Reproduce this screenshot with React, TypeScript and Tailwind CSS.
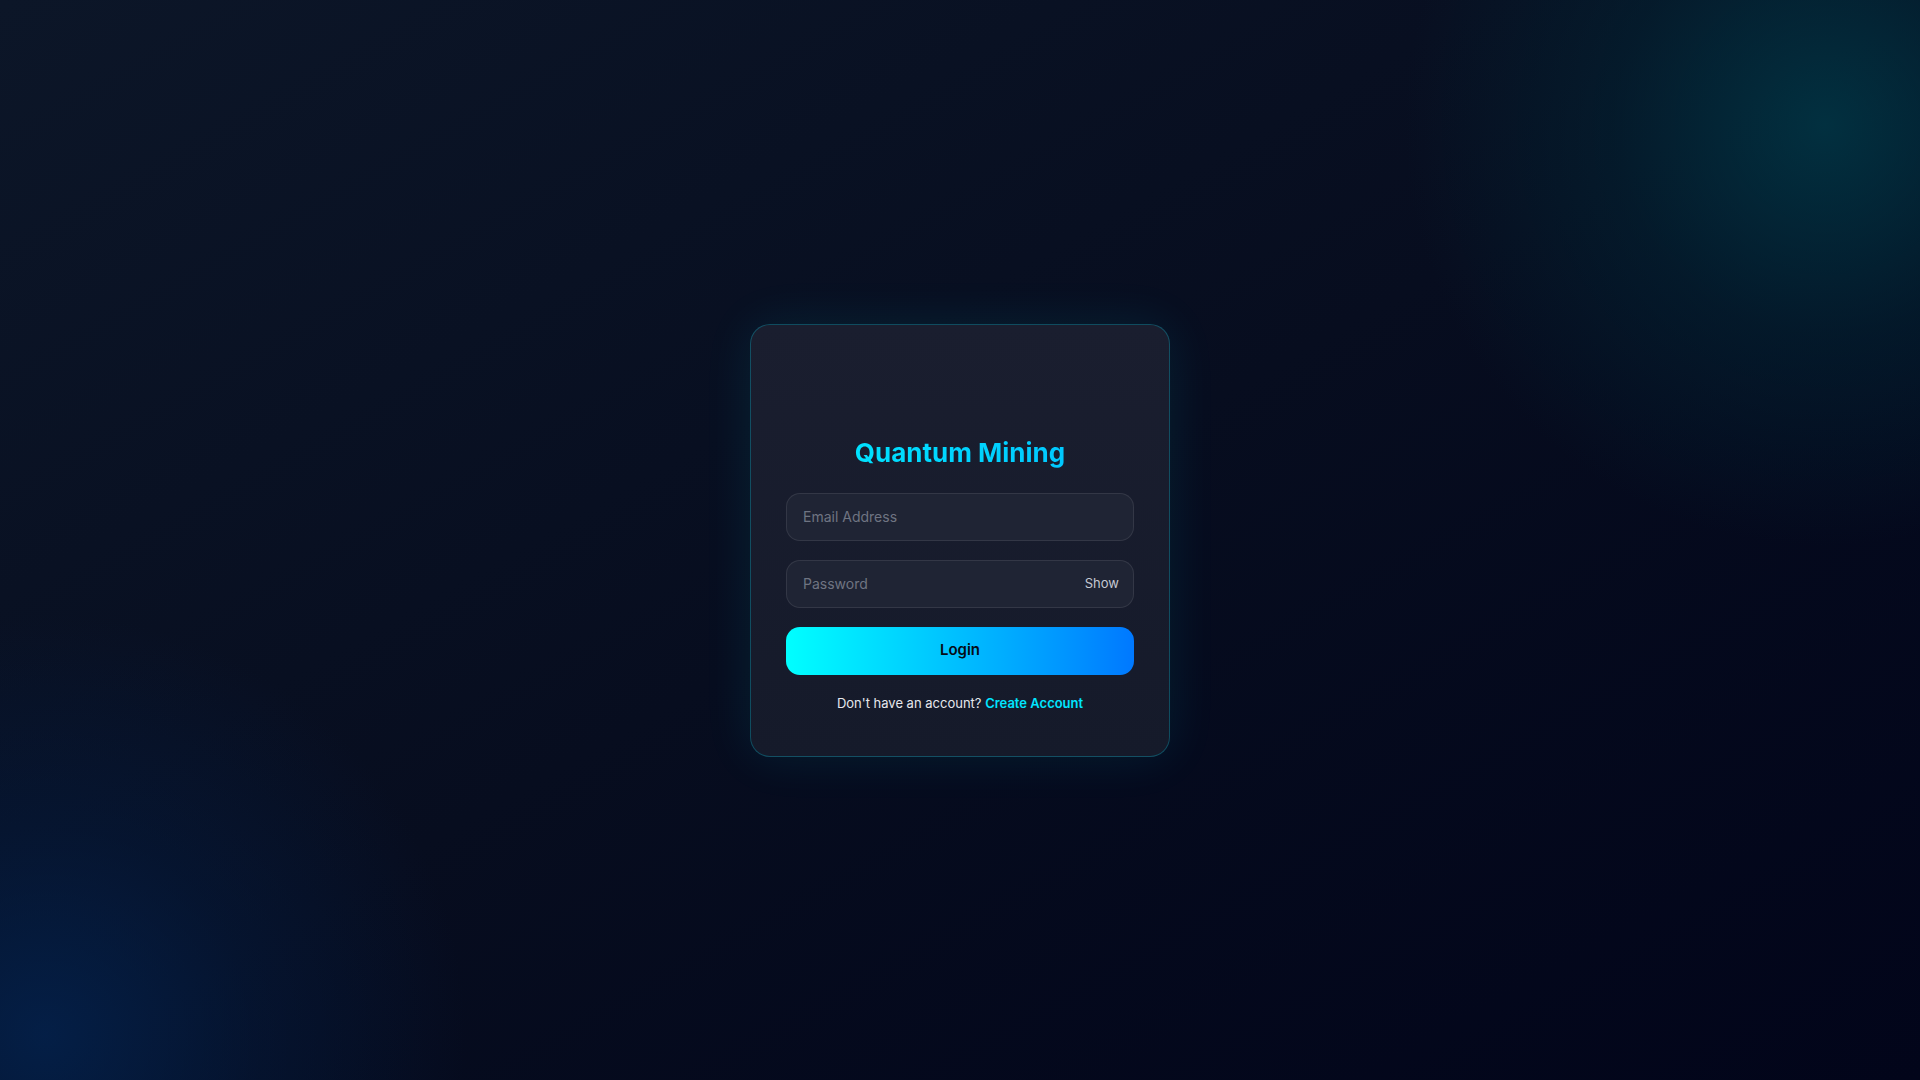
import React, { useState } from 'react';

export default function App() {
  const [showPassword, setShowPassword] = useState(false);

  return (
    <div
      className="relative min-h-screen w-full overflow-hidden flex items-center justify-center bg-gradient-to-br from-[#0c1628] via-[#070d1f] to-[#02051a]"
      style={{ fontFamily: 'Inter, "Noto Sans", sans-serif' }}
    >
      {/* Ambient glows */}
      <div className="pointer-events-none absolute -top-[300px] right-[-330px] w-[850px] h-[850px] rounded-full bg-[radial-gradient(circle,rgba(0,60,75,0.75)_0%,rgba(0,45,60,0.4)_35%,rgba(0,30,45,0)_70%)]" />
      <div className="pointer-events-none absolute -bottom-[380px] -left-[380px] w-[850px] h-[850px] rounded-full bg-[radial-gradient(circle,rgba(3,35,80,0.8)_0%,rgba(3,30,70,0.4)_35%,rgba(3,25,60,0)_70%)]" />

      {/* Card */}
      <div className="relative z-10 w-[420px] rounded-[20px] border border-[#00e5ff]/25 bg-gradient-to-b from-[#1a1e2f] to-[#151a2a] px-[35px] pt-9 pb-[43px] shadow-[0_0_50px_rgba(0,229,255,0.09)]">
        {/* Logo slot */}
        <div className="h-[74px]" />

        <h1 className="text-center text-[26px] leading-[35px] font-bold bg-gradient-to-r from-[#00eaff] to-[#00c0ff] bg-clip-text text-transparent mb-[23px]">
          Quantum Mining
        </h1>

        <form className="flex flex-col gap-[19px]" onSubmit={(e) => e.preventDefault()}>
          <input
            type="email"
            placeholder="Email Address"
            className="h-12 w-full rounded-[14px] border border-white/[0.09] bg-[#1f2434] px-4 text-[14px] text-gray-100 placeholder:text-[#6f7482] outline-none"
          />

          <div className="relative">
            <input
              type={showPassword ? 'text' : 'password'}
              placeholder="Password"
              className="h-12 w-full rounded-[14px] border border-white/[0.09] bg-[#1f2434] pl-4 pr-16 text-[14px] text-gray-100 placeholder:text-[#6f7482] outline-none"
            />
            <button
              type="button"
              onClick={() => setShowPassword((s) => !s)}
              className="absolute right-[15px] top-1/2 -translate-y-1/2 text-[13px] text-[#c5c9d2]"
            >
              {showPassword ? 'Hide' : 'Show'}
            </button>
          </div>

          <button
            type="submit"
            className="h-12 w-full rounded-[14px] bg-gradient-to-r from-[#00ffff] to-[#0078ff] text-[15px] font-semibold text-[#070b16]"
          >
            Login
          </button>
        </form>

        <p className="mt-[18px] text-center text-[13px] leading-5 text-[#e6e8ee]">
          Don't have an account?{' '}
          <a href="#" className="font-semibold text-[#00e5ff]">
            Create Account
          </a>
        </p>
      </div>
    </div>
  );
}
